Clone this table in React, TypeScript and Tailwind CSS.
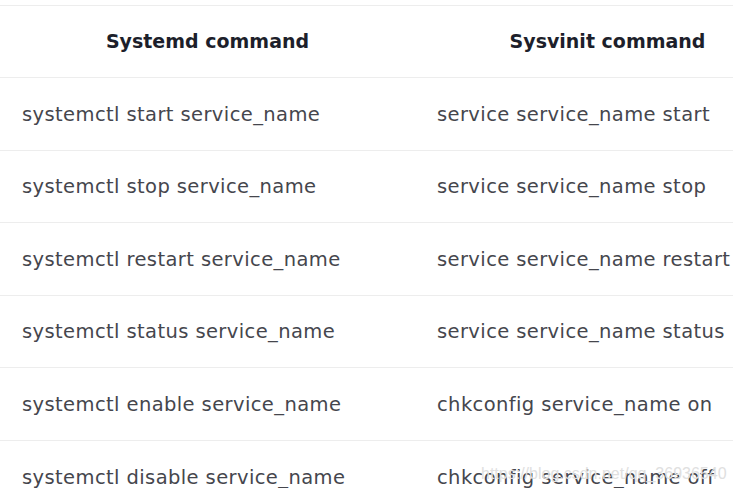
const rows = [
  ['systemctl start service_name', 'service service_name start'],
  ['systemctl stop service_name', 'service service_name stop'],
  ['systemctl restart service_name', 'service service_name restart'],
  ['systemctl status service_name', 'service service_name status'],
  ['systemctl enable service_name', 'chkconfig service_name on'],
  ['systemctl disable service_name', 'chkconfig service_name off'],
]

export default function App() {
  return (
    <div className="w-[733px] h-[488px] overflow-hidden bg-white pt-[5px] font-['DejaVu_Sans',sans-serif] relative">
      <div className="w-[800px]">
        <div className="grid grid-cols-[415px_385px] h-[73px] border-t border-b border-[#ededed] items-center text-[19px] font-bold text-[#1d1f2b]">
          <div className="text-center">Systemd command</div>
          <div className="text-center">Sysvinit command</div>
        </div>
        {rows.map((r, i) => (
          <div
            key={i}
            className="grid grid-cols-[415px_385px] h-[72.6px] border-b border-[#ededed] items-center text-[19.5px] tracking-[0.4px] text-[#45464d]"
          >
            <div className="pl-[22px] pt-[1px]">{r[0]}</div>
            <div className="pl-[22px] pt-[1px]">{r[1]}</div>
          </div>
        ))}
      </div>
      <div className="absolute left-[481px] top-[462px] text-[16px] text-[#e0e0e0] font-['Liberation_Sans',sans-serif]">
        https://blog.csdn.net/qq_36936540
      </div>
    </div>
  )
}
